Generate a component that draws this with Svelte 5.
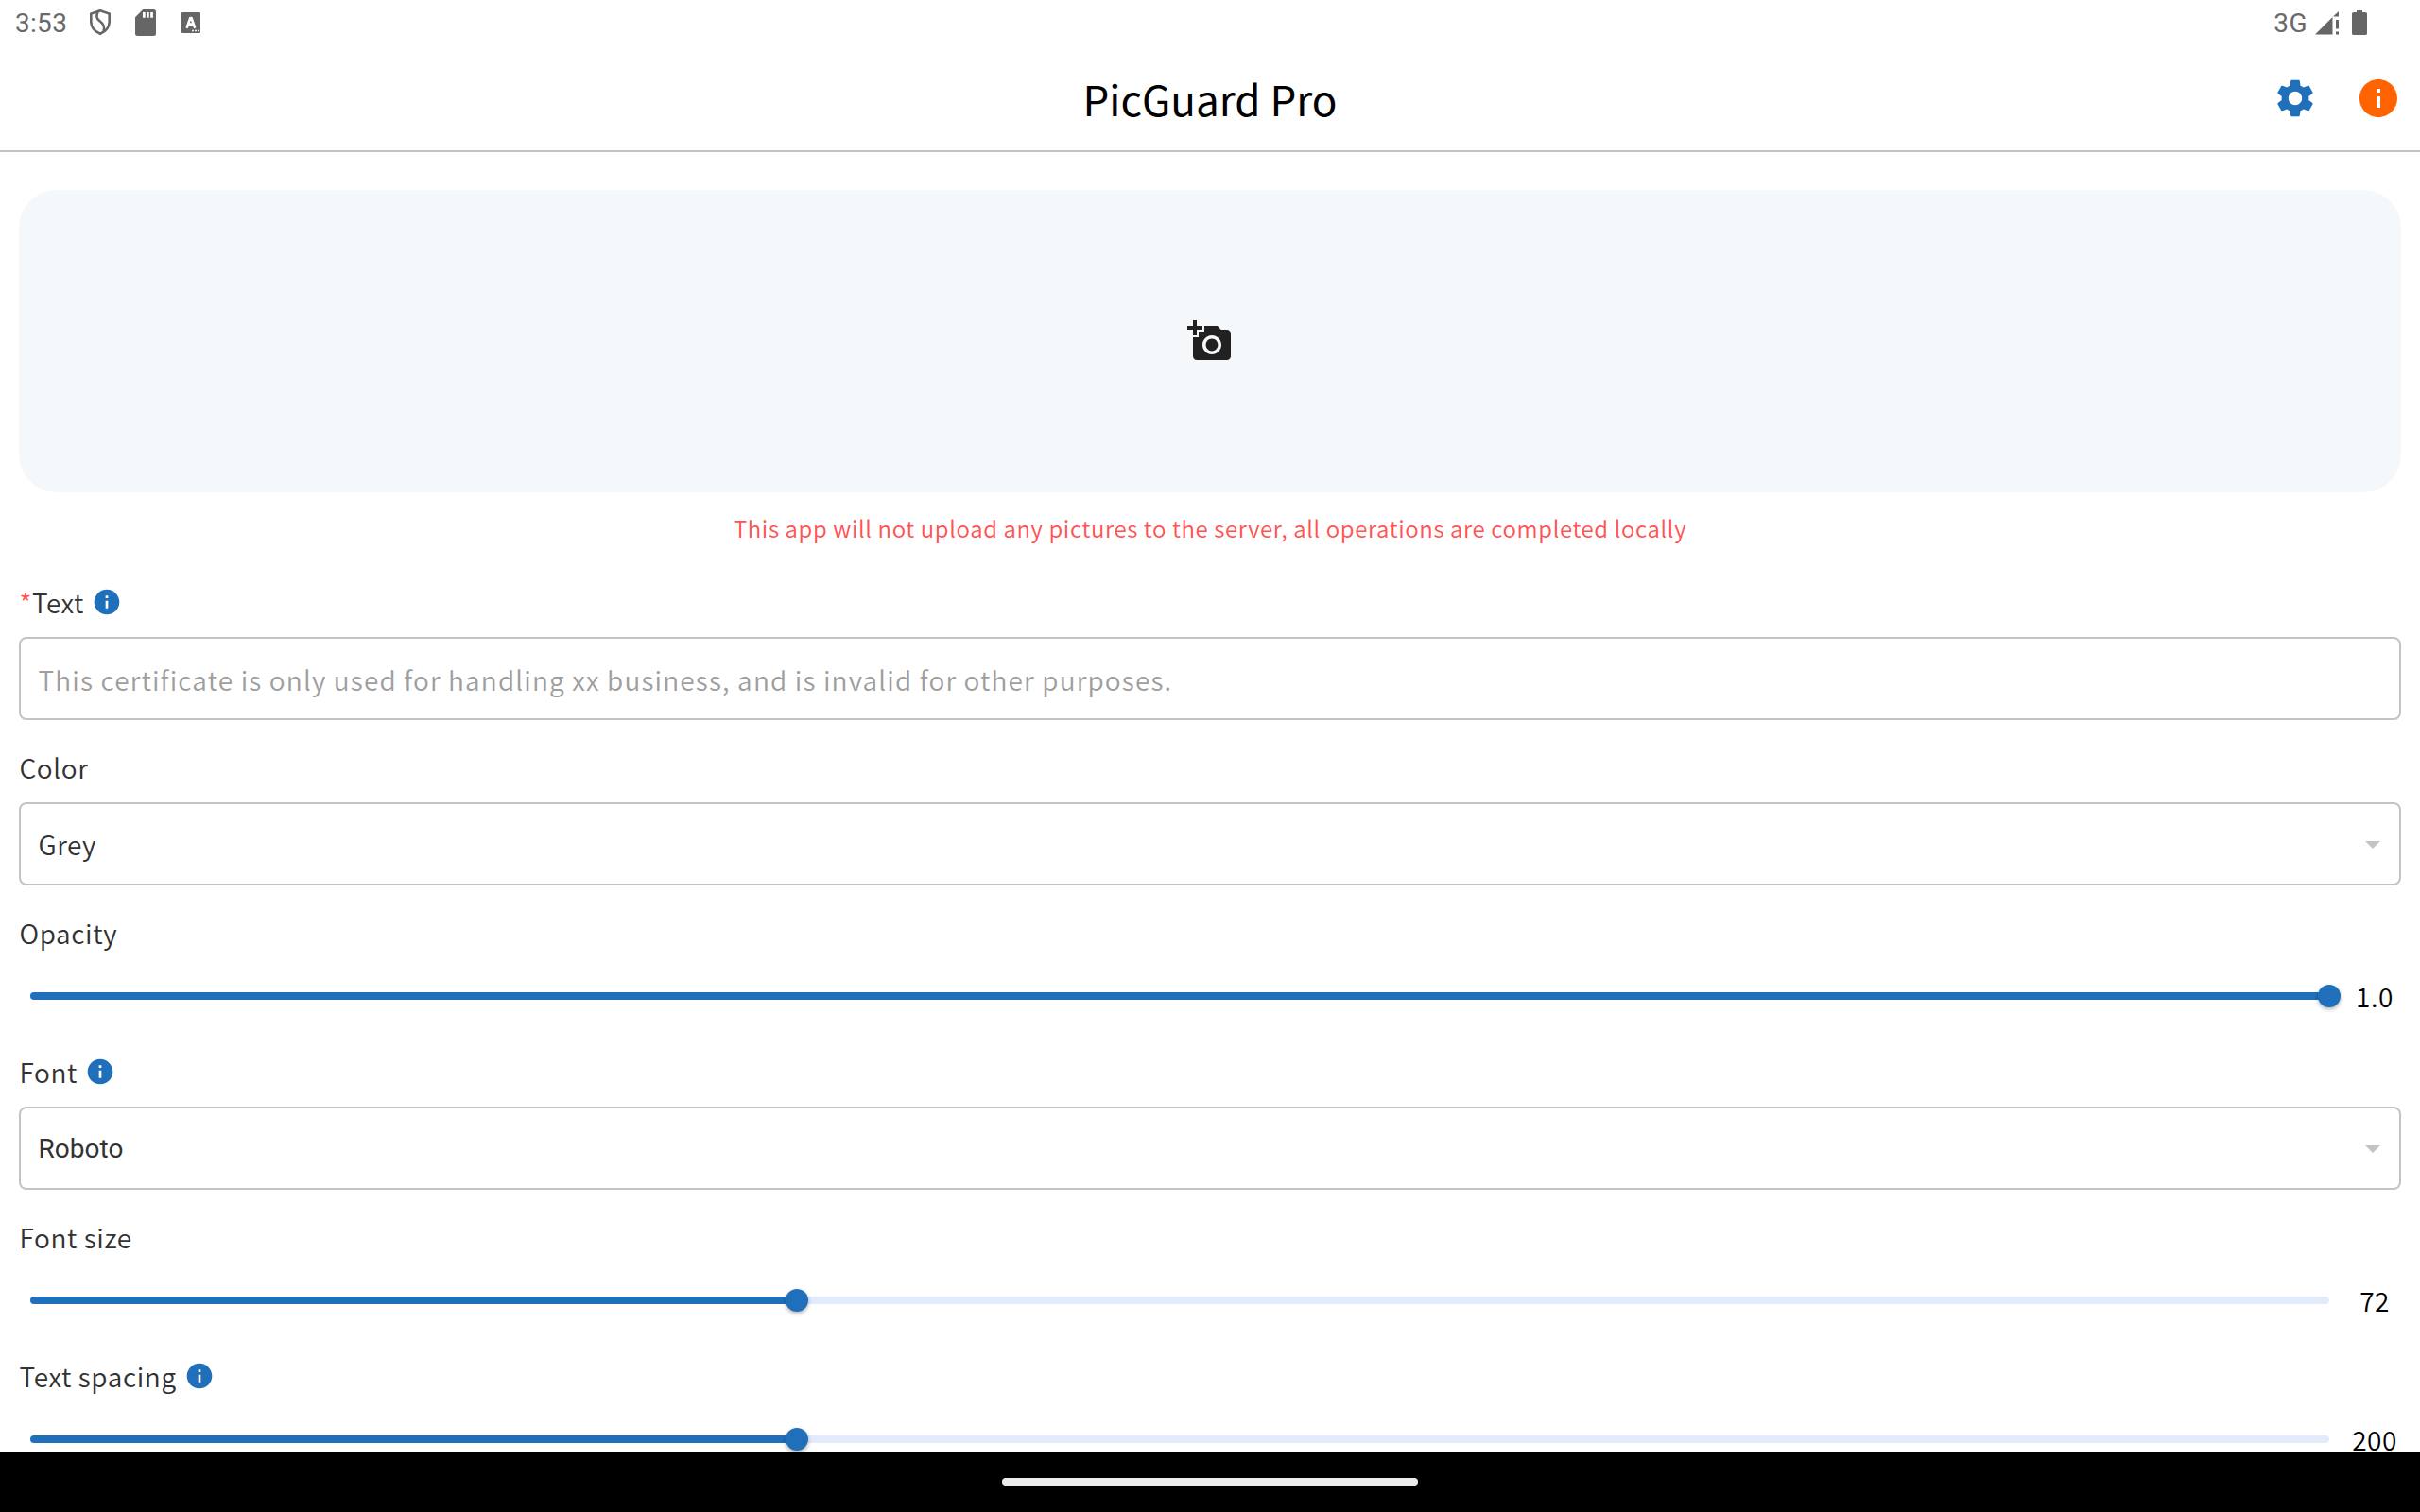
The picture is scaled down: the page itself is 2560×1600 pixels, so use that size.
<script>
  const fields = [
    { label: 'Text', required: true, info: true, kind: 'input', placeholder: 'This certificate is only used for handling xx business, and is invalid for other purposes.' },
    { label: 'Color', kind: 'select', value: 'Grey' },
    { label: 'Opacity', kind: 'slider', value: '1.0', percent: 100 },
    { label: 'Font', info: true, kind: 'select', value: 'Roboto', roboto: true },
    { label: 'Font size', kind: 'slider', value: '72', percent: 33.333 },
    { label: 'Text spacing', info: true, kind: 'slider', value: '200', percent: 33.333 },
  ];
</script>

{#snippet infoIcon()}
  <svg class="info" viewBox="0 0 24 24">
    <path fill="currentColor" d="M12 2C6.48 2 2 6.48 2 12s4.48 10 10 10 10-4.48 10-10S17.52 2 12 2zm1 15h-2v-6h2v6zm0-8h-2V7h2v2z" />
  </svg>
{/snippet}

<div class="screen">
  <div class="status">
    <span class="clock">3:53</span>
    <svg class="shield" viewBox="0 0 24 30">
      <path d="M12 2.2 21.7 5.6V14c0 6-4 10.300-9.700 12.800C6.300 24.300 2.300 20 2.300 14V5.600z" />
      <path d="M9.800 3.300C7.300 7.500 8 10.600 11.500 13.200c4.200 3.100 5.500 5.700 4 10.700" />
    </svg>
    <svg class="sd" viewBox="0 0 22 28">
      <path fill-rule="evenodd" d="M8.200 0H19.500A2.500 2.500 0 0 1 22 2.500v23a2.500 2.500 0 0 1-2.500 2.500h-17A2.500 2.500 0 0 1 0 25.500V8.200zM8 3v5.700h2.700V3zM12 3v5.700h2.700V3zM16.200 3v5.700h2.700V3z" />
    </svg>
    <svg class="badge" viewBox="0 0 20 22">
      <rect width="20" height="22" rx="1" />
      <path class="stroke" d="M5.900 15.800 9.300 6h1.200l3.400 9.800M7.200 12.600h5.400" />
      <circle class="dot" cx="12" cy="19.600" r="1" /><circle class="dot" cx="15" cy="19.600" r="1" /><circle class="dot" cx="18" cy="19.600" r="1" />
    </svg>
    <span class="net">3G</span>
    <svg class="signal" viewBox="0 0 25 25">
      <path d="M0 24.500 18.500 6v18.500zM19.500 5 25 0v5.500h-5.500zM22 9h3v9.500h-3zM22 21.500h3v3h-3z" />
    </svg>
    <svg class="battery" viewBox="0 0 16 26">
      <path d="M5 0h6v2h3.200C15.200 2 16 2.800 16 3.800v20.400c0 1-.8 1.800-1.800 1.800H1.800C.8 26 0 25.200 0 24.200V3.800C0 2.800.8 2 1.800 2H5z" />
    </svg>
  </div>

  <header>
    <h1>PicGuard Pro</h1>
    <div class="actions">
      <svg class="gear" viewBox="0 0 24 24">
        <path fill="currentColor" d="M19.140 12.940c.04-.3.06-.61.06-.94 0-.32-.02-.64-.07-.94l2.030-1.580c.18-.14.23-.41.12-.61l-1.920-3.320c-.12-.22-.37-.29-.59-.22l-2.390.96c-.5-.38-1.030-.7-1.620-.94L14.400 2.810c-.04-.24-.24-.41-.48-.41h-3.840c-.24 0-.43.17-.47.41L9.250 5.350C8.660 5.590 8.120 5.920 7.630 6.290L5.240 5.330c-.22-.08-.47 0-.59.22L2.740 8.870c-.12.21-.08.47.12.61l2.030 1.580c-.05.3-.09.63-.09.94s.02.64.07.94l-2.030 1.580c-.18.14-.23.41-.12.61l1.920 3.320c.12.22.37.29.59.22l2.390-.96c.5.38 1.030.7 1.620.94l.36 2.540c.05.24.24.41.48.41h3.840c.24 0 .44-.17.47-.41l.36-2.540c.59-.24 1.130-.56 1.620-.94l2.390.96c.22.08.47 0 .59-.22l1.920-3.320c.12-.22.07-.47-.12-.61l-2.010-1.580zM12 15.600c-1.980 0-3.600-1.620-3.600-3.600s1.620-3.600 3.600-3.600 3.600 1.620 3.600 3.600-1.620 3.600-3.600 3.600z" />
      </svg>
      <span class="about">{@render infoIcon()}</span>
    </div>
  </header>

  <main>
    <div class="picker">
      <svg viewBox="0 0 24 24">
        <path fill="currentColor" d="M3 4V1h2v3h3v2H5v3H3V6H0V4h3zm3 6V7h3V4h7l1.830 2H21c1.100 0 2 .9 2 2v12c0 1.100-.9 2-2 2H5c-1.100 0-2-.9-2-2V10h3zm7 9c2.760 0 5-2.240 5-5s-2.240-5-5-5-5 2.240-5 5 2.240 5 5 5zm-3.200-5c0 1.770 1.430 3.200 3.200 3.200s3.200-1.430 3.200-3.200-1.430-3.200-3.200-3.200-3.200 1.430-3.200 3.200z" />
      </svg>
    </div>
    <p class="notice">This app will not upload any pictures to the server, all operations are completed locally</p>

    {#each fields as f}
      <section>
        <div class="label">
          {#if f.required}<span class="req">*</span>{/if}<span class:tight={f.required}>{f.label}</span>
          {#if f.info}{@render infoIcon()}{/if}
        </div>
        {#if f.kind === 'slider'}
          <div class="slider">
            <div class="track">
              <div class="fill" style="width: {f.percent}%"></div>
              <div class="thumb"></div>
            </div>
            <span class="value">{f.value}</span>
          </div>
        {:else}
          <div class="box">
            {#if f.kind === 'input'}
              <span class="placeholder">{f.placeholder}</span>
            {:else}
              <span class:roboto={f.roboto}>{f.value}</span>
              <svg class="arrow" viewBox="0 0 16 8"><path fill="currentColor" d="M0 0h16L8 8z" /></svg>
            {/if}
          </div>
        {/if}
      </section>
    {/each}
  </main>

  <nav><div class="pill"></div></nav>
</div>

<style>
  :global(body) { background: #fff; }
  .screen {
    width: 2560px;
    height: 1600px;
    display: flex;
    flex-direction: column;
    overflow: hidden;
    background: #fff;
    color: #323232;
    font: 350 28px/40px "Noto Sans CJK SC", "Noto Sans", sans-serif;
  }
  svg { display: block; flex: none; }

  .status {
    flex: none;
    height: 48px;
    box-sizing: border-box;
    padding: 0 56px 0 16px;
    display: flex;
    align-items: center;
    font-family: Roboto, sans-serif;
    font-weight: 400;
    color: #6a6a6a;
    fill: #666;
  }
  .clock { width: 78px; padding-top: 2px; line-height: 50px; letter-spacing: 0.300px; }
  .shield { width: 24px; height: 30px; fill: none; stroke: #666; stroke-width: 2.600; }
  .sd { width: 22px; height: 28px; margin-left: 25px; }
  .badge { width: 20px; height: 22px; margin-left: 27px; }
  .stroke { fill: none; stroke: #fff; stroke-width: 2.600; stroke-linejoin: round; stroke-linecap: round; }
  .dot { fill: #fff; }
  .net { margin-left: auto; padding-top: 1px; font-weight: 450; line-height: 50px; letter-spacing: 0.500px; }
  .signal { width: 25px; height: 25px; margin: 1px 14px 0 8px; }
  .battery { width: 16px; height: 26px; }

  header {
    flex: none;
    height: 113px;
    box-sizing: border-box;
    border-bottom: 2px solid #c4c4c4;
    display: grid;
    grid-template-columns: 1fr auto 1fr;
    align-items: center;
  }
  h1 {
    grid-column: 2;
    margin: 0;
    padding-top: 1px;
    font-size: 44px;
    line-height: 64px;
    font-weight: 400;
    color: #000;
  }
  .actions { justify-self: end; display: flex; gap: 40px; padding-right: 20px; color: #1f6fbb; }
  .gear, .about .info { width: 48px; height: 48px; margin: 0; }
  .about { color: #ff6400; }

  main { flex: 1; min-height: 0; overflow: hidden; padding: 40px 20px 0; }
  .picker {
    height: 320px;
    border-radius: 40px;
    background: #f4f8fb;
    color: #212121;
    display: flex;
    align-items: center;
    justify-content: center;
  }
  .picker svg { width: 48px; height: 48px; }
  .notice {
    margin: 0;
    height: 66px;
    padding-top: 18px;
    box-sizing: border-box;
    text-align: center;
    font-size: 24px;
    letter-spacing: 0.610px;
    color: #ff5252;
  }
  .label { height: 57px; padding: 30px 0 0 0.500px; display: flex; align-items: flex-start; letter-spacing: 0.600px; }
  .info { width: 32px; height: 32px; margin: 4px 0 0 8px; }
  .label .info { color: #1f6fbb; }
  .req { color: #ff5252; letter-spacing: 0.500px; }
  .tight { letter-spacing: 0.450px; }
  .box {
    height: 88px;
    box-sizing: border-box;
    border: 2px solid #c3c3c3;
    border-radius: 8px;
    padding: 0 20px 0 18.500px;
    display: flex;
    align-items: center;
    justify-content: space-between;
    letter-spacing: 0.500px;
  }
  .placeholder { padding-top: 1px; color: #9e9e9e; letter-spacing: 1.148px; }
  .roboto { padding-top: 1px; font-family: Roboto, sans-serif; font-weight: 400; letter-spacing: 0.050px; }
  .arrow { width: 16px; height: 8px; margin-top: 1px; color: #c3c3c3; }

  .slider { height: 60px; padding-left: 12px; display: flex; align-items: center; gap: 20px; }
  .track { flex: none; width: 2432px; height: 8px; border-radius: 4px; background: #e2ebfc; display: flex; align-items: center; }
  .fill { flex: none; height: 8px; border-radius: 4px; background: #1f6fbb; }
  .thumb {
    flex: none;
    width: 24px;
    height: 24px;
    margin: 0 -12px;
    border-radius: 50%;
    background: #1f6fbb;
    box-shadow: 0 2px 4px rgba(0, 0, 0, 0.300);
  }
  .value { flex: 1; padding-bottom: 1px; text-align: center; letter-spacing: 0.500px; color: #000; }

  nav { flex: none; height: 64px; background: #000; display: flex; align-items: center; justify-content: center; }
  .pill { width: 440px; height: 8px; border-radius: 4px; background: #ececec; }
</style>
